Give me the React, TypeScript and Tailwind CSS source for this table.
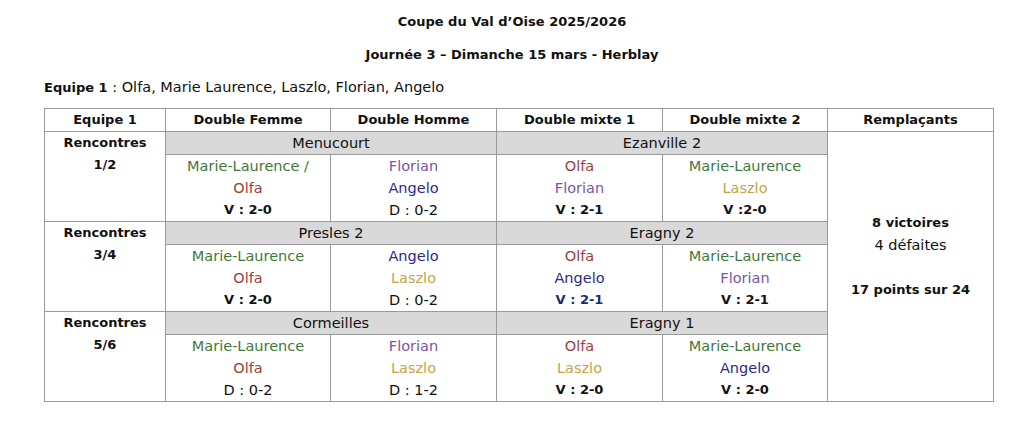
import React from "react";

type Name = "ML" | "MLs" | "Olfa" | "Florian" | "Angelo" | "Laszlo";

const nameCls: Record<Name, string> = {
  ML: "text-[#3d7a3a]",
  MLs: "text-[#3d7a3a]",
  Olfa: "text-[#9a3f3f]",
  Florian: "text-[#7b55a6]",
  Angelo: "text-[#2a2a8c]",
  Laszlo: "text-[#c4a548]",
};
const nameTxt: Record<Name, string> = {
  ML: "Marie-Laurence",
  MLs: "Marie-Laurence /",
  Olfa: "Olfa",
  Florian: "Florian",
  Angelo: "Angelo",
  Laszlo: "Laszlo",
};

type Match = { a: Name; b: Name; res: string; win: boolean; navy?: boolean };

const blocks: { label: string; teams: [string, string]; matches: Match[] }[] = [
  {
    label: "1/2",
    teams: ["Menucourt", "Ezanville 2"],
    matches: [
      { a: "MLs", b: "Olfa", res: "V : 2-0", win: true },
      { a: "Florian", b: "Angelo", res: "D : 0-2", win: false },
      { a: "Olfa", b: "Florian", res: "V : 2-1", win: true },
      { a: "ML", b: "Laszlo", res: "V :2-0", win: true },
    ],
  },
  {
    label: "3/4",
    teams: ["Presles 2", "Eragny 2"],
    matches: [
      { a: "ML", b: "Olfa", res: "V : 2-0", win: true },
      { a: "Angelo", b: "Laszlo", res: "D : 0-2", win: false },
      { a: "Olfa", b: "Angelo", res: "V : 2-1", win: true, navy: true },
      { a: "ML", b: "Florian", res: "V : 2-1", win: true },
    ],
  },
  {
    label: "5/6",
    teams: ["Cormeilles", "Eragny 1"],
    matches: [
      { a: "ML", b: "Olfa", res: "D : 0-2", win: false },
      { a: "Florian", b: "Laszlo", res: "D : 1-2", win: false },
      { a: "Olfa", b: "Laszlo", res: "V : 2-0", win: true },
      { a: "ML", b: "Angelo", res: "V : 2-0", win: true },
    ],
  },
];

const bd = "border border-[#9a9a9a]";

export default function App() {
  return (
    <div
      className="w-[1024px] h-[447px] bg-white text-[#111] text-[14.5px] leading-[22px] overflow-hidden"
      style={{ fontFamily: '"DejaVu Sans", sans-serif' }}
    >
      <div className="pt-[11px] text-center font-bold text-[13px] h-[44px]">
        Coupe du Val d’Oise 2025/2026
      </div>
      <div className="text-center font-bold text-[13px] h-[32px]">
        Journée 3 – Dimanche 15 mars - Herblay
      </div>
      <div className="pl-[44px] h-[32px]">
        <span className="font-bold text-[13px]">Equipe 1</span> : Olfa, Marie Laurence, Laszlo, Florian, Angelo
      </div>
      <table className="ml-[44px] table-fixed border-collapse w-[949px]">
        <colgroup>
          <col className="w-[121px]" />
          <col className="w-[165px]" />
          <col className="w-[166px]" />
          <col className="w-[166px]" />
          <col className="w-[165px]" />
          <col className="w-[166px]" />
        </colgroup>
        <thead>
          <tr className="h-[23px]">
            {["Equipe 1", "Double Femme", "Double Homme", "Double mixte 1", "Double mixte 2", "Remplaçants"].map((h) => (
              <th key={h} className={`${bd} font-bold text-[13px] p-0 leading-[22px]`}>
                {h}
              </th>
            ))}
          </tr>
        </thead>
        <tbody>
          {blocks.map((b, bi) => (
            <React.Fragment key={b.label}>
              <tr className="h-[22px]">
                <td rowSpan={2} className={`${bd} align-top text-center font-bold text-[13px] p-0`}>
                  <div>Rencontres</div>
                  <div>{b.label}</div>
                </td>
                <td colSpan={2} className={`${bd} bg-[#d9d9d9] text-center p-0`}>
                  {b.teams[0]}
                </td>
                <td colSpan={2} className={`${bd} bg-[#d9d9d9] text-center p-0`}>
                  {b.teams[1]}
                </td>
                {bi === 0 && (
                  <td rowSpan={6} className={`${bd} align-top text-center p-0 pt-[80px]`}>
                    <div className="font-bold text-[13px]">8 victoires</div>
                    <div>4 défaites</div>
                    <div className="font-bold text-[13px] mt-[23px]">17 points sur 24</div>
                  </td>
                )}
              </tr>
              <tr>
                {b.matches.map((m, mi) => (
                  <td key={mi} className={`${bd} text-center p-0 h-[67px]`}>
                    <div className={nameCls[m.a]}>{nameTxt[m.a]}</div>
                    <div className={nameCls[m.b]}>{nameTxt[m.b]}</div>
                    <div
                      className={
                        m.win
                          ? `font-bold text-[13px] ${m.navy ? "text-[#1f2a6e]" : ""}`
                          : ""
                      }
                    >
                      {m.res}
                    </div>
                  </td>
                ))}
              </tr>
            </React.Fragment>
          ))}
        </tbody>
      </table>
    </div>
  );
}
